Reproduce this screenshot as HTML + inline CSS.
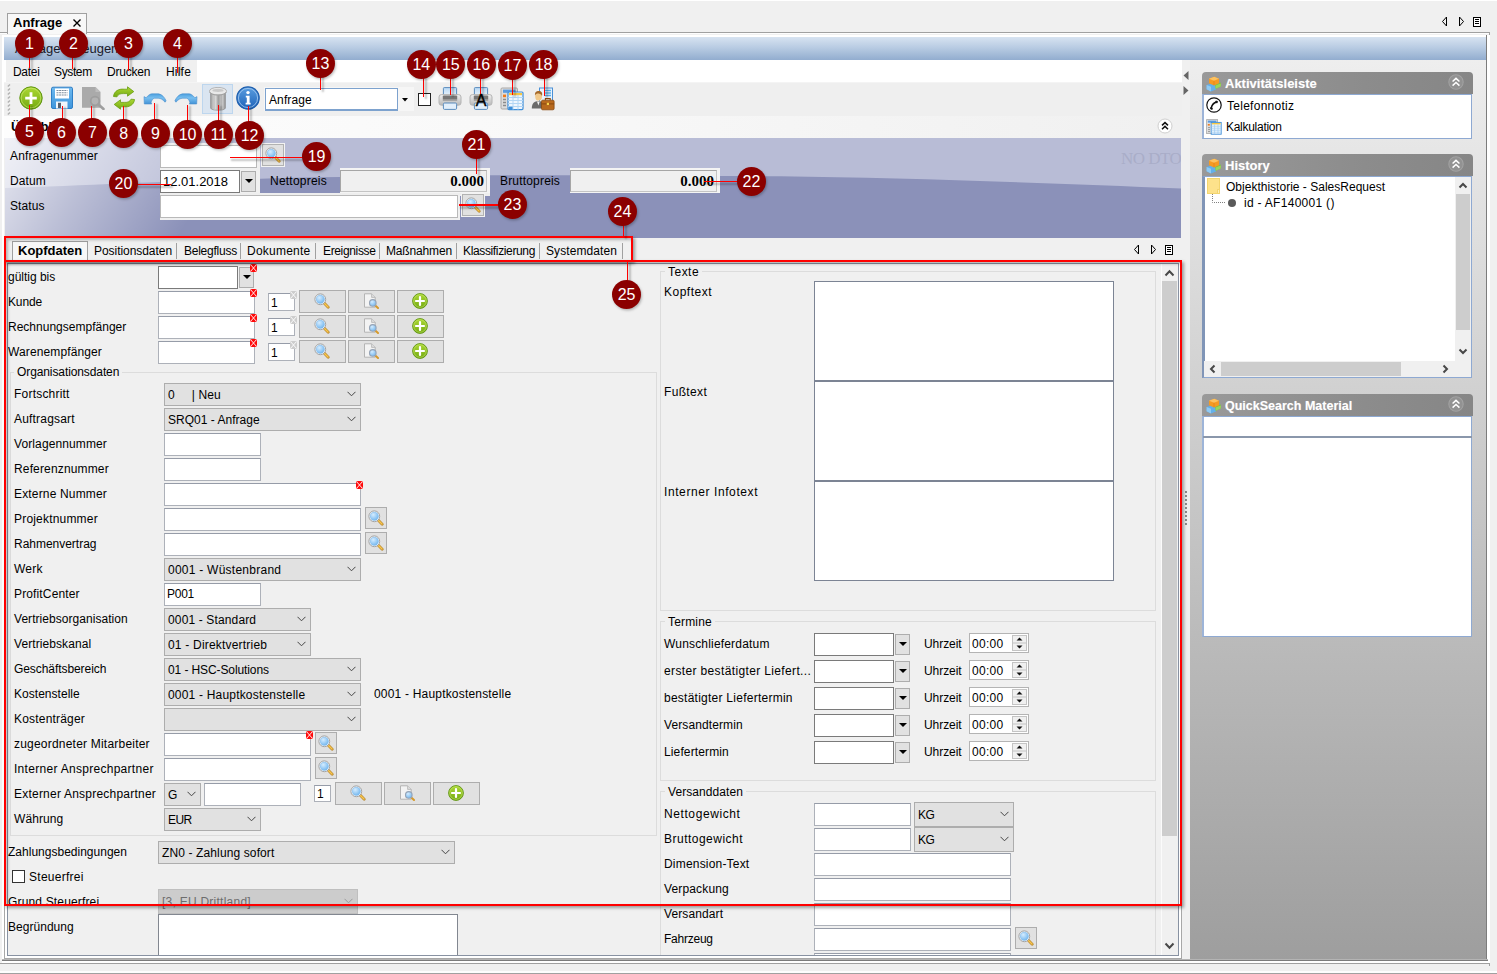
<!DOCTYPE html>
<html><head><meta charset="utf-8"><title>Anfrage</title>
<style>
*{box-sizing:border-box;margin:0;padding:0}
html,body{width:1497px;height:974px;overflow:hidden;background:#f0f0f0}
body{position:relative;font-family:"Liberation Sans",sans-serif;font-size:12px;color:#000;letter-spacing:0.1px}
.a{position:absolute}
.t{position:absolute;white-space:nowrap;line-height:14px;height:14px}
.f{position:absolute;background:#fff;border:1px solid #7a7a7a}
.fl{position:absolute;background:#fff;border:1px solid #adb1b9;border-top-color:#969ca8}
.cb{position:absolute;background:#e1e1e1;border:1px solid #adadad}
.cb>span{position:absolute;left:3px;top:50%;margin-top:-7px;line-height:14px;white-space:nowrap}
.cb>svg{position:absolute;right:4px;top:50%;margin-top:-3.5px}
.btn{position:absolute;background:#e1e1e1;border:1px solid #adadad}
.db{position:absolute;background:#e1e1e1;border:1px solid #adadad}
.db:after{content:"";position:absolute;left:2.5px;top:7px;border:4px solid transparent;border-top:4px solid #000;border-bottom:none}
.grp{position:absolute;border:1px solid #dcdcdc}
.leg{position:absolute;background:#f0f0f0;padding:0 3px;line-height:14px;white-space:nowrap}
.circ{position:absolute;width:29px;height:29px;border-radius:50%;background:#8b0000;color:#fff;font-size:16px;line-height:29px;text-align:center;letter-spacing:0;box-shadow:1px 1.5px 2.5px rgba(0,0,0,.25)}
.rl{position:absolute;background:#ff0000;box-shadow:2.4px 1.5px 2px .5px rgba(0,0,0,.24)}
.rh{box-shadow:1.5px 2.6px 2px .5px rgba(0,0,0,.24)}
.rr{position:absolute;border:2px solid #ff0000;box-shadow:2px 2px 3px rgba(0,0,0,.35), inset 2px 2px 3px rgba(0,0,0,.25)}
.ph{position:absolute;left:1202px;width:271px;height:22px;border-radius:4px 4px 0 0;background:linear-gradient(90deg,#999 0%,#8c8c8c 60%,#868686 100%)}
.ph b{position:absolute;left:23px;top:4px;color:#fff;font-size:13px;text-shadow:0 0 1px rgba(255,255,255,.4);line-height:15px;white-space:nowrap;letter-spacing:0}
.pc{position:absolute;left:1202px;width:270px;background:#fff;border:1px solid #8ea9d2;border-left:2px solid #9db4d8}
</style></head><body>
<svg width="0" height="0" style="position:absolute">
<defs>
<radialGradient id="gLens" cx="38%" cy="32%" r="75%"><stop offset="0" stop-color="#d4ecff"/><stop offset="1" stop-color="#6db4ee"/></radialGradient>
<linearGradient id="gGreen" x1="0" y1="0" x2="0" y2="1"><stop offset="0" stop-color="#acd834"/><stop offset="1" stop-color="#74aa12"/></linearGradient>
<linearGradient id="gBlueArr" x1="0" y1="0" x2="0" y2="1"><stop offset="0" stop-color="#4b9fde"/><stop offset=".4" stop-color="#78bff0"/><stop offset="1" stop-color="#4493d6"/></linearGradient>
<linearGradient id="gInfo" x1="0" y1="0" x2="0" y2="1"><stop offset="0" stop-color="#5b9ee0"/><stop offset="1" stop-color="#1d62b8"/></linearGradient>
<linearGradient id="gTrash" x1="0" y1="0" x2="1" y2="0"><stop offset="0" stop-color="#9a9a9a"/><stop offset=".28" stop-color="#e2e2e2"/><stop offset=".55" stop-color="#a4a4a4"/><stop offset=".8" stop-color="#cfcfcf"/><stop offset="1" stop-color="#8e8e8e"/></linearGradient>
<linearGradient id="gPrn" x1="0" y1="0" x2="0" y2="1"><stop offset="0" stop-color="#f0f0f0"/><stop offset="1" stop-color="#b8b8b8"/></linearGradient>
<linearGradient id="gPaper" x1="0" y1="0" x2="0" y2="1"><stop offset="0" stop-color="#b9d9f5"/><stop offset="1" stop-color="#eef6fd"/></linearGradient>
<linearGradient id="gSave" x1="0" y1="0" x2="0" y2="1"><stop offset="0" stop-color="#6db9ef"/><stop offset="1" stop-color="#3e95dc"/></linearGradient>

<symbol id="mag" viewBox="0 0 16 16">
<path d="M9.6 9.6 L14.2 14.2" stroke="#b8862c" stroke-width="2.8" stroke-linecap="round"/>
<path d="M10 10 L14 14" stroke="#f7c64e" stroke-width="1.5" stroke-linecap="round"/>
<circle cx="6.3" cy="6.3" r="5.4" fill="#fff" stroke="#9a9a9a" stroke-width=".9"/>
<circle cx="6.3" cy="6.3" r="4.2" fill="url(#gLens)" stroke="#7fb4e4" stroke-width=".5"/>
</symbol>

<symbol id="docmag" viewBox="0 0 16 16">
<path d="M1.5 0.8 H8.6 L12.2 4.4 V14.2 H1.5 Z" fill="#f3f3f3" stroke="#b4b4b4" stroke-width="1"/>
<path d="M8.6 0.8 V4.4 H12.2" fill="#dedede" stroke="#b4b4b4" stroke-width=".8"/>
<path d="M12 12.2 L15 15" stroke="#d69a2b" stroke-width="2" stroke-linecap="round"/>
<circle cx="9.8" cy="9.9" r="3.3" fill="url(#gLens)" stroke="#97a4b6" stroke-width="1.1"/>
</symbol>

<symbol id="plus16" viewBox="0 0 16 16">
<circle cx="8" cy="8" r="7.4" fill="url(#gGreen)" stroke="#5f9412" stroke-width=".9"/>
<circle cx="8" cy="8" r="6.3" fill="none" stroke="#d4ee7e" stroke-opacity=".6" stroke-width=".8"/>
<path d="M8 4 V12 M4 8 H12" stroke="#fff" stroke-width="2.2" stroke-linecap="round"/>
</symbol>

<symbol id="err" viewBox="0 0 7 8">
<rect x="0" y="0" width="7" height="8" rx="2" fill="#ff0a0a"/>
<path d="M0.9 1 L6.1 7 M6.1 1 L0.9 7" stroke="#fff" stroke-width=".9"/>
</symbol>
<symbol id="errg" viewBox="0 0 7 8">
<rect x="0" y="0" width="7" height="8" rx="2" fill="#cdcdcd"/>
<path d="M0.9 1 L6.1 7 M6.1 1 L0.9 7" stroke="#fff" stroke-width=".9"/>
</symbol>

<symbol id="plus24" viewBox="0 0 24 24">
<circle cx="12" cy="12" r="11.2" fill="url(#gGreen)" stroke="#5f9412" stroke-width="1"/>
<circle cx="12" cy="12" r="9.8" fill="none" stroke="#d4ee7e" stroke-opacity=".55" stroke-width="1"/>
<path d="M12 6.3 V17.9 M6.2 12.1 H17.8" stroke="#fff" stroke-width="2.8"/>
</symbol>

<symbol id="save24" viewBox="0 0 24 24">
<rect x="1.5" y="1.2" width="21" height="21.3" rx="1.5" fill="url(#gSave)" stroke="#2f7fc6" stroke-width="1"/>
<rect x="5" y="2.5" width="14" height="10" fill="#fff"/>
<path d="M6.5 4.5 H17.5 M6.5 6.7 H17.5 M6.5 9 H17.5" stroke="#7d8c9c" stroke-width="1.1" stroke-dasharray="2 .6"/>
<rect x="6" y="15.5" width="11.5" height="7" fill="#f2f6fb"/>
<rect x="8" y="16.8" width="3" height="5.2" fill="#55606e"/>
</symbol>

<symbol id="docsrch24" viewBox="0 0 24 24">
<path d="M1 1 H14.5 L19.5 6 V21.8 H1 Z" fill="#aaaaaa"/>
<path d="M14.5 1 V6 H19.5 Z" fill="#bdbdbd"/>
<circle cx="14" cy="15" r="4.3" fill="#b3b3b3" stroke="#9e9e9e" stroke-width="1.8"/>
<path d="M17.5 18.5 L22.5 23" stroke="#9e9e9e" stroke-width="2.6" stroke-linecap="round"/>
</symbol>

<symbol id="refresh24" viewBox="0 0 24 24">
<path d="M1.5 10.5 C2 5 7 2.6 12 3.2 L15.5 3.2 L15.5 0.8 L21.8 5.6 L15.5 10.2 L15.5 7.6 L11.5 7.6 C8 7.4 5.8 8.6 5 10.8 Z" fill="url(#gGreen)" stroke="#6a9e10" stroke-width=".8"/>
<path d="M22.5 13.5 C22 19 17 21.4 12 20.8 L8.5 20.8 L8.5 23.2 L2.2 18.4 L8.5 13.8 L8.5 16.4 L12.5 16.4 C16 16.6 18.2 15.4 19 13.2 Z" fill="url(#gGreen)" stroke="#6a9e10" stroke-width=".8"/>
</symbol>

<symbol id="undo24" viewBox="0 0 24 12">
<path d="M1 3.6 L3.1 4.8 C5 2.4 7 0.9 9 0.8 L15.5 0.8 C19 1.3 21.8 4.6 23.1 7.9 L22 9.2 C20 6.6 17.8 5.3 15.2 5.2 L11.5 5.2 C10 5.5 8.8 7.2 8.1 9.2 L8.7 11 L1.3 11 Z" fill="url(#gBlueArr)" stroke="#4a8fcc" stroke-width=".6" stroke-linejoin="round"/>
</symbol>
<symbol id="redo24" viewBox="0 0 24 12">
<path transform="translate(24 0) scale(-1 1)" d="M1 3.6 L3.1 4.8 C5 2.4 7 0.9 9 0.8 L15.5 0.8 C19 1.3 21.8 4.6 23.1 7.9 L22 9.2 C20 6.6 17.8 5.3 15.2 5.2 L11.5 5.2 C10 5.5 8.8 7.2 8.1 9.2 L8.7 11 L1.3 11 Z" fill="url(#gBlueArr)" stroke="#4a8fcc" stroke-width=".6" stroke-linejoin="round"/>
</symbol>

<symbol id="trash24" viewBox="0 0 18 24">
<path d="M1.6 5 V21 C1.8 24 16.2 24 16.4 21 V5 Z" fill="url(#gTrash)" stroke="#8e8e8e" stroke-width=".7"/>
<path d="M5.2 8 V22 M9 8.5 V22.6 M12.8 8 V22" stroke="#8a8a8a" stroke-width=".7" opacity=".55"/>
<ellipse cx="9" cy="4.2" rx="8.6" ry="3.8" fill="#e9e9e9" stroke="#a8a8a8" stroke-width=".8"/>
<ellipse cx="9" cy="3.4" rx="5.6" ry="1.7" fill="#c9c9c9"/>
<path d="M0.6 5 C2 9 16 9 17.4 5" fill="none" stroke="#9c9c9c" stroke-width=".8"/>
</symbol>

<symbol id="info24" viewBox="0 0 24 24">
<circle cx="12" cy="12" r="11.2" fill="url(#gInfo)" stroke="#1f5fae" stroke-width="1.2"/>
<circle cx="12" cy="12" r="9.6" fill="none" stroke="#a9cdf2" stroke-opacity=".8" stroke-width="1"/>
<circle cx="12" cy="6.6" r="1.7" fill="#fff"/>
<path d="M9.8 9.8 H13.6 V16.8 H14.6 V18.6 H9.6 V16.8 H10.8 V11.5 H9.8 Z" fill="#fff"/>
</symbol>

<symbol id="print24" viewBox="0 0 24 24">
<rect x="5.4" y=".6" width="13.2" height="9" rx=".8" fill="url(#gPaper)" stroke="#5b8cbd" stroke-width="1"/>
<rect x="1" y="7.6" width="22" height="10.6" rx="2.4" fill="url(#gPrn)" stroke="#b4b4b4" stroke-width="1"/>
<rect x="4.8" y="8.4" width="14.4" height="4.4" rx="1" fill="#777"/>
<rect x="4.8" y="12.2" width="14.4" height="1.6" fill="#9b9b9b"/>
<rect x="5.4" y="16" width="13.2" height="6.4" rx="1.2" fill="#e2effb" stroke="#5b8cbd" stroke-width="1"/>
</symbol>

<symbol id="calc24" viewBox="0 0 24 24">
<rect x="1" y="1" width="16.5" height="21" rx="1.2" fill="#dcdcdc" stroke="#a8a8a8" stroke-width="1"/>
<rect x="3" y="2.6" width="12.5" height="3.2" fill="#5a9be0"/>
<rect x="3" y="7.6" width="3" height="2.6" fill="#f07a1a"/>
<path d="M3 12.5 H6 M3 15.5 H6 M3 18.5 H6" stroke="#8a8a8a" stroke-width="1.6"/>
<rect x="8" y="5" width="15" height="17.6" rx="1" fill="#eef6fe" stroke="#3e8ed8" stroke-width="1.2"/>
<rect x="9" y="6" width="13" height="2.2" fill="#f7c844"/>
<path d="M8 10.5 H23 M8 13.5 H23 M8 16.5 H23 M8 19.5 H23 M13 8 V22.6 M18 8 V22.6" stroke="#b2d6f4" stroke-width="1"/>
<rect x="8.6" y="19.8" width="4" height="2.4" fill="#3e8ed8"/>
</symbol>

<symbol id="person24" viewBox="0 0 24 24">
<rect x="8.5" y="1" width="13" height="15" fill="#e8f3fd" stroke="#4a90d6" stroke-width="1"/>
<path d="M14 3.5 H20 M14 6 H20 M14 8.5 H20" stroke="#5bb0ea" stroke-width="1.4"/>
<path d="M0.8 21.5 C0.8 16 3.5 14.4 7.5 14 C11.5 14.4 13.5 16 13.5 21.5 Z" fill="#6b6b6b"/>
<path d="M6 14.4 L7.4 18.5 L8.8 14.4 Z" fill="#f2f2f2"/>
<ellipse cx="7.6" cy="9.4" rx="3.4" ry="4.2" fill="#f1c98b"/>
<path d="M4 8.6 C3.6 4.6 6 3.8 8.2 4 C10.8 4 11.8 6.4 11 9 C10.2 7 8.4 6.6 6.4 6.6 C5.2 6.8 4.6 7.6 4 8.6 Z" fill="#a4692a"/>
<rect x="10.5" y="13.2" width="12.6" height="9.6" rx="1.2" fill="#b8691d" stroke="#8a4a10" stroke-width=".8"/>
<path d="M14.4 13.2 V11.6 H19.2 V13.2" fill="none" stroke="#8a4a10" stroke-width="1.1"/>
<rect x="10.5" y="16.4" width="12.6" height="1" fill="#8a4a10"/>
<rect x="15.8" y="15.8" width="2.2" height="2.2" fill="#f6d34a"/>
</symbol>

<symbol id="boxes16" viewBox="0 0 16 16">
<path d="M0.6 9 L5.6 7.4 L10 9.2 L10 13.4 L5 15.4 L0.6 13.2 Z" fill="#63b0ea"/>
<path d="M0.6 9 L5 10.8 L5 15.4 L0.6 13.2 Z" fill="#8fcaf4"/>
<path d="M9 8.2 L14.8 6.4 L14.8 10.6 L9.6 12.8 Z" fill="#7fc242"/>
<path d="M9.6 9.4 L14.8 7.4 L14.8 10.6 L9.6 12.8 Z" fill="#9ad55a"/>
<path d="M3 2.8 L8.2 0.8 L13 2.8 L13 7.2 L8 9.4 L3 7.2 Z" fill="#f59a23"/>
<path d="M3 2.8 L8 4.8 L13 2.8 L8.2 0.8 Z" fill="#fbc262"/>
<path d="M8 4.8 V9.4" stroke="#d97d12" stroke-width=".6"/>
</symbol>

<symbol id="phone16" viewBox="0 0 16 16">
<circle cx="8" cy="8" r="7.2" fill="#fff" stroke="#111" stroke-width="1.2"/>
<path d="M5.3 11.2 C5.6 8.6 7.6 6 10.4 5" fill="none" stroke="#111" stroke-width="1.5" stroke-linecap="round"/>
<path d="M4.6 10.6 L6.4 11.2 L6.2 12.4 L4.6 12 Z M9.8 4 L11.6 4.4 L11.2 5.8 L9.9 5.6 Z" fill="#111" stroke="#111" stroke-width=".8" stroke-linejoin="round"/>
</symbol>

<symbol id="calc16" viewBox="0 0 16 16">
<rect x=".6" y=".6" width="11" height="14" fill="#dedede" stroke="#a8a8a8" stroke-width=".8"/>
<rect x="1.8" y="1.6" width="8.6" height="2" fill="#5a9be0"/>
<rect x="1.8" y="5" width="2" height="1.6" fill="#f07a1a"/>
<path d="M2 8.6 H4 M2 10.6 H4 M2 12.6 H4" stroke="#9a9a9a" stroke-width="1"/>
<rect x="5.2" y="3.4" width="10" height="11.8" fill="#eef6fe" stroke="#3e8ed8" stroke-width=".9"/>
<rect x="5.8" y="4" width="8.8" height="1.4" fill="#f7c844"/>
<path d="M5.2 7.2 H15.2 M5.2 9.2 H15.2 M5.2 11.2 H15.2 M5.2 13.2 H15.2 M8.6 5.4 V15.2 M12 5.4 V15.2" stroke="#9ccaf2" stroke-width=".7"/>
</symbol>

<symbol id="chev" viewBox="0 0 14 14">
<circle cx="7" cy="7" r="6.3" fill="#929292" stroke="#a2a2a2" stroke-width=".9"/>
<path d="M4 6.6 L7 3.8 L10 6.6 M4 10.2 L7 7.4 L10 10.2" fill="none" stroke="#fff" stroke-width="1.3"/>
</symbol>
<symbol id="chevw" viewBox="0 0 16 16">
<circle cx="8" cy="8" r="7" fill="#fff" stroke="#cfcfcf" stroke-width="1"/>
<path d="M5 7.4 L8 4.6 L11 7.4 M5 11.2 L8 8.4 L11 11.2" fill="none" stroke="#111" stroke-width="1.5"/>
</symbol>
</defs></svg>
<div class="a" style="left:0px;top:32px;width:1490px;height:1px;background:#a0a0a0"></div>
<div class="a" style="left:0px;top:33px;width:1490px;height:1px;background:#fdfdfd"></div>
<div class="a" style="left:1489px;top:32px;width:1px;height:934px;background:#a0a0a0"></div>
<div class="a" style="left:7px;top:13px;width:80px;height:21px;background:#f8f8f8;border:1px solid #a0a0a0;border-bottom:none"></div>
<div class="a" style="left:0px;top:0px;width:1497px;height:1px;background:#fff"></div>
<div class="t" style="left:13px;top:15px;font-weight:bold;font-size:13px;line-height:15px;letter-spacing:0">Anfrage</div>
<svg class="a" style="left:72px;top:18px" width="10" height="10" viewBox="0 0 10 10"><path d="M1.5 1.5 L8.5 8.5 M8.5 1.5 L1.5 8.5" stroke="#000" stroke-width="1.4"/></svg>
<svg class="a" style="left:1440px;top:15px" width="44" height="13" viewBox="0 0 44 13"><path d="M6.5 2 L2.5 6.5 L6.5 11 Z" fill="none" stroke="#000" stroke-width="1"/><path d="M19.5 2 L23.5 6.5 L19.5 11 Z" fill="none" stroke="#000" stroke-width="1"/><g shape-rendering="crispEdges"><rect x="33.5" y="2.5" width="7" height="9" fill="#fff" stroke="#000" stroke-width="1"/><path d="M35 4.5 H39 M35 6.5 H39 M35 8.5 H39" stroke="#000" stroke-width="1"/></g></svg>
<div class="a" style="left:2px;top:35px;width:1488px;height:926px;background:#fff"></div>
<div class="a" style="left:1486px;top:35px;width:1px;height:926px;background:#7c7c7c"></div>
<div class="a" style="left:1487px;top:35px;width:2px;height:928px;background:#fff"></div>
<div class="a" style="left:4px;top:37px;width:1482px;height:23px;background:linear-gradient(180deg,#d7e3f1 0%,#b9cce3 45%,#92adcf 100%)"></div>
<div class="a" style="left:4px;top:60px;width:1482px;height:899px;background:#f0f0f0"></div>
<div class="t" style="left:15px;top:41px;font-size:13px;line-height:15px;color:#1a1a2a;letter-spacing:0">Anfrage erzeugen</div>
<div class="a" style="left:4px;top:60px;width:1178px;height:22px;background:#fff"></div>
<div class="a" style="left:6px;top:60px;width:191px;height:22px;background:#f0f0f0"></div>
<div class="t" style="left:13px;top:65px;"><span style="letter-spacing:-0.30px">Datei</span></div>
<div class="t" style="left:54px;top:65px;"><span style="letter-spacing:-0.37px">System</span></div>
<div class="t" style="left:107px;top:65px;"><span style="letter-spacing:-0.21px">Drucken</span></div>
<div class="t" style="left:166px;top:65px;"><span style="letter-spacing:0.20px">Hilfe</span></div>
<div class="a" style="left:4px;top:82px;width:1178px;height:34px;background:#efefef"></div>
<div class="a" style="left:4px;top:82px;width:1178px;height:1px;background:#f4f4f4"></div>
<svg class="a" style="left:7px;top:84px" width="4" height="32" viewBox="0 0 4 32"><path d="M0.8 2.6 L3 0.6" stroke="#b0b0b0" stroke-width="1.3"/><path d="M0.8 6.6 L3 4.6" stroke="#b0b0b0" stroke-width="1.3"/><path d="M0.8 10.6 L3 8.6" stroke="#b0b0b0" stroke-width="1.3"/><path d="M0.8 14.6 L3 12.6" stroke="#b0b0b0" stroke-width="1.3"/><path d="M0.8 18.6 L3 16.6" stroke="#b0b0b0" stroke-width="1.3"/><path d="M0.8 22.6 L3 20.6" stroke="#b0b0b0" stroke-width="1.3"/><path d="M0.8 26.6 L3 24.6" stroke="#b0b0b0" stroke-width="1.3"/><path d="M0.8 30.6 L3 28.6" stroke="#b0b0b0" stroke-width="1.3"/></svg>
<svg class="a" style="left:19px;top:86px;" width="24" height="24" viewBox="0 0 24 24"><use href="#plus24"/></svg>
<svg class="a" style="left:50px;top:86px;" width="24" height="24" viewBox="0 0 24 24"><use href="#save24"/></svg>
<svg class="a" style="left:81px;top:86px;" width="24" height="24" viewBox="0 0 24 24"><use href="#docsrch24"/></svg>
<svg class="a" style="left:112px;top:86px;" width="24" height="24" viewBox="0 0 24 24"><use href="#refresh24"/></svg>
<svg class="a" style="left:143px;top:92.5px;" width="24" height="12" viewBox="0 0 24 12"><use href="#undo24"/></svg>
<svg class="a" style="left:174px;top:92.5px;" width="24" height="12" viewBox="0 0 24 12"><use href="#redo24"/></svg>
<div class="a" style="left:202px;top:84px;width:31px;height:30px;background:#dae5f1;border:1px solid #bdd6ee"></div>
<svg class="a" style="left:208.5px;top:86.5px;" width="18" height="24" viewBox="0 0 18 24"><use href="#trash24"/></svg>
<svg class="a" style="left:236px;top:86px;" width="24" height="24" viewBox="0 0 24 24"><use href="#info24"/></svg>
<div class="a" style="left:264px;top:87px;width:150px;height:24px;background:#f6f6f6"></div>
<div class="a" style="left:265px;top:88px;width:133px;height:23px;background:#fff;border:1px solid #7da2ce;border-bottom:2px solid #7da2ce"></div>
<div class="t" style="left:269px;top:93px;">Anfrage</div>
<svg class="a" style="left:401.5px;top:98px" width="6" height="3.5" viewBox="0 0 6 3.5"><path d="M0 0 H6 L3 3.5 Z" fill="#000"/></svg>
<div class="a" style="left:418px;top:93px;width:13px;height:13px;background:#fff;border:1px solid #222"></div>
<svg class="a" style="left:438px;top:87px;" width="24" height="24" viewBox="0 0 24 24"><use href="#print24"/></svg>
<svg class="a" style="left:469px;top:87px;" width="24" height="24" viewBox="0 0 24 24"><use href="#print24"/></svg>
<div class="t" style="left:473px;top:91px;-webkit-text-stroke:.45px #000;font-size:16px;line-height:19px;height:19px;letter-spacing:0;width:16px;text-align:center">A</div>
<svg class="a" style="left:500px;top:87px;" width="24" height="24" viewBox="0 0 24 24"><use href="#calc24"/></svg>
<svg class="a" style="left:531px;top:87px;" width="24" height="24" viewBox="0 0 24 24"><use href="#person24"/></svg>
<div class="a" style="left:4px;top:116px;width:1178px;height:22px;background:linear-gradient(90deg,#fdfdfd 0%,#f9f9f9 40%,#f0f0f0 100%)"></div>
<div class="t" style="left:11px;top:119px;font-weight:bold;font-size:13px;line-height:15px;letter-spacing:0">Überblick</div>
<svg class="a" style="left:1157px;top:118px;" width="16" height="16" viewBox="0 0 16 16"><use href="#chevw"/></svg>
<svg class="a" style="left:5px;top:138px" width="1176" height="100" viewBox="0 0 1177 100" preserveAspectRatio="none">
<defs><linearGradient id="hdL" gradientUnits="userSpaceOnUse" x1="0" y1="0" x2="170" y2="105"><stop offset="0" stop-color="#fff" stop-opacity=".8"/><stop offset=".45" stop-color="#fff" stop-opacity=".42"/><stop offset="1" stop-color="#fff" stop-opacity="0"/></linearGradient></defs>
<rect width="1177" height="100" fill="#b8bcd6"/>
<path d="M0 50 C100 47 200 41 336 39 C450 37 560 36.5 776 38.3 C900 40 1050 45 1177 50.5 V100 H0 Z" fill="#8b91b9"/>
<rect width="260" height="100" fill="url(#hdL)"/>
</svg>
<div class="t" style="left:10px;top:149px;"><span style="letter-spacing:0.15px">Anfragenummer</span></div>
<div class="t" style="left:10px;top:174px;"><span style="letter-spacing:0.13px">Datum</span></div>
<div class="t" style="left:10px;top:199px;"><span style="letter-spacing:0.11px">Status</span></div>
<div class="a" style="left:160px;top:143px;width:100px;height:27px;background:#f0f0f0"></div>
<div class="a" style="left:160px;top:145px;width:97px;height:23px;background:#fff;border:1px solid #b9b9b9"></div>
<div class="a" style="left:262px;top:144px;width:22px;height:22px;background:#e1e1e1;border:1px solid #b2b2b2;box-shadow:0 0 0 1px #f3f3f3"><svg class="a" style="left:2px;top:2px" width="16" height="16" viewBox="0 0 16 16"><use href="#mag"/></svg></div>
<div class="a" style="left:160px;top:170px;width:100px;height:23px;background:#f0f0f0"></div>
<div class="a" style="left:160px;top:193px;width:330px;height:3px;background:#eeeeee"></div>
<div class="f" style="left:160px;top:170px;width:80px;height:23px;"></div>
<div class="t" style="left:163px;top:174px;font-size:13px;line-height:15px;letter-spacing:0">12.01.2018</div>
<div class="db" style="left:241px;top:171px;width:15px;height:21px;"></div>
<div class="t" style="left:270px;top:174px;"><span style="letter-spacing:0.23px">Nettopreis</span></div>
<div class="a" style="left:340px;top:168px;width:150px;height:25px;background:#f4f4f4"></div>
<div class="a" style="left:340px;top:170px;width:147px;height:22px;background:#f0f0f0;border:1px solid #a6a6a6;border-bottom-color:#c4c4c4;border-right-color:#c4c4c4"></div>
<div class="t" style="left:440px;top:173px;font-family:'Liberation Serif',serif;font-weight:bold;font-size:15px;line-height:17px;letter-spacing:0;width:44px;text-align:right">0.000</div>
<div class="t" style="left:500px;top:174px;"><span style="letter-spacing:0.18px">Bruttopreis</span></div>
<div class="a" style="left:570px;top:168px;width:150px;height:25px;background:#f4f4f4"></div>
<div class="a" style="left:570px;top:170px;width:147px;height:22px;background:#f0f0f0;border:1px solid #a6a6a6;border-bottom-color:#c4c4c4;border-right-color:#c4c4c4"></div>
<div class="t" style="left:670px;top:173px;font-family:'Liberation Serif',serif;font-weight:bold;font-size:15px;line-height:17px;letter-spacing:0;width:44px;text-align:right">0.000</div>
<div class="a" style="left:160px;top:195px;width:298px;height:23px;background:#fff;border:1px solid #b9b9b9;box-shadow:1px 1px 0 1px #f0f0f0"></div>
<div class="a" style="left:462px;top:194px;width:22px;height:22px;background:#e1e1e1;border:1px solid #b2b2b2;box-shadow:0 0 0 1px #f3f3f3"><svg class="a" style="left:2px;top:2px" width="16" height="16" viewBox="0 0 16 16"><use href="#mag"/></svg></div>
<div class="t" style="left:1121px;top:149px;font-family:'Liberation Serif',serif;font-size:17px;line-height:19px;height:19px;color:#a9adc8;letter-spacing:-.55px;width:60px;overflow:hidden">NO DTO</div>
<div class="a" style="left:4px;top:238px;width:1178px;height:25px;background:#f0f0f0"></div>
<div class="a" style="left:4px;top:261px;width:1178px;height:1px;background:#a0a0a0"></div>
<div class="a" style="left:12px;top:241px;width:76px;height:21px;background:#f7f7f7;border:1px solid #a0a0a0;border-bottom:none"></div>
<div class="t" style="left:18px;top:243px;font-weight:bold;font-size:13px;line-height:15px;letter-spacing:0">Kopfdaten</div>
<div class="t" style="left:94px;top:244px;"><span style="letter-spacing:-0.05px">Positionsdaten</span></div>
<div class="t" style="left:184px;top:244px;"><span style="letter-spacing:-0.24px">Belegfluss</span></div>
<div class="t" style="left:247px;top:244px;"><span style="letter-spacing:0.24px">Dokumente</span></div>
<div class="t" style="left:323px;top:244px;"><span style="letter-spacing:-0.35px">Ereignisse</span></div>
<div class="t" style="left:386px;top:244px;"><span style="letter-spacing:-0.15px">Maßnahmen</span></div>
<div class="t" style="left:463px;top:244px;"><span style="letter-spacing:-0.36px">Klassifizierung</span></div>
<div class="t" style="left:546px;top:244px;"><span style="letter-spacing:0.09px">Systemdaten</span></div>
<div class="a" style="left:176px;top:243px;width:1px;height:16px;background:#a0a0a0"></div>
<div class="a" style="left:240px;top:243px;width:1px;height:16px;background:#a0a0a0"></div>
<div class="a" style="left:315px;top:243px;width:1px;height:16px;background:#a0a0a0"></div>
<div class="a" style="left:379px;top:243px;width:1px;height:16px;background:#a0a0a0"></div>
<div class="a" style="left:456px;top:243px;width:1px;height:16px;background:#a0a0a0"></div>
<div class="a" style="left:539px;top:243px;width:1px;height:16px;background:#a0a0a0"></div>
<div class="a" style="left:622px;top:243px;width:1px;height:16px;background:#a0a0a0"></div>
<svg class="a" style="left:1132px;top:243px" width="44" height="13" viewBox="0 0 44 13"><path d="M6.5 2 L2.5 6.5 L6.5 11 Z" fill="none" stroke="#000" stroke-width="1"/><path d="M19.5 2 L23.5 6.5 L19.5 11 Z" fill="none" stroke="#000" stroke-width="1"/><g shape-rendering="crispEdges"><rect x="33.5" y="2.5" width="7" height="9" fill="#fff" stroke="#000" stroke-width="1"/><path d="M35 4.5 H39 M35 6.5 H39 M35 8.5 H39" stroke="#000" stroke-width="1"/></g></svg>
<div class="a" style="left:0;top:263px;width:1161px;height:692px;overflow:hidden">
<div class="a" style="left:0;top:-263px;width:1161px;height:1200px">
<div class="t" style="left:8px;top:270px;"><span style="letter-spacing:-0.02px">gültig bis</span></div>
<div class="f" style="left:158px;top:266px;width:80px;height:23px;"></div>
<div class="db" style="left:239px;top:267px;width:15px;height:21px;"></div>
<svg class="a" style="left:250px;top:264px;" width="7" height="8" viewBox="0 0 7 8"><use href="#err"/></svg>
<div class="t" style="left:8px;top:295px;"><span style="letter-spacing:-0.14px">Kunde</span></div>
<div class="fl" style="left:158px;top:291px;width:97px;height:23px;"></div>
<svg class="a" style="left:250px;top:289px;" width="7" height="8" viewBox="0 0 7 8"><use href="#err"/></svg>
<div class="fl" style="left:268px;top:293px;width:27px;height:18px;"></div>
<div class="t" style="left:271px;top:296px;">1</div>
<svg class="a" style="left:290px;top:291px;" width="7" height="8" viewBox="0 0 7 8"><use href="#errg"/></svg>
<div class="btn" style="left:299px;top:290px;width:47px;height:23px"><svg class="a" style="left:14px;top:2px" width="16" height="16" viewBox="0 0 16 16"><use href="#mag"/></svg></div>
<div class="btn" style="left:348px;top:290px;width:47px;height:23px"><svg class="a" style="left:14px;top:2px" width="16" height="16" viewBox="0 0 16 16"><use href="#docmag"/></svg></div>
<div class="btn" style="left:397px;top:290px;width:47px;height:23px"><svg class="a" style="left:14px;top:2px" width="16" height="16" viewBox="0 0 16 16"><use href="#plus16"/></svg></div>
<div class="t" style="left:8px;top:320px;"><span style="letter-spacing:0.01px">Rechnungsempfänger</span></div>
<div class="fl" style="left:158px;top:316px;width:97px;height:23px;"></div>
<svg class="a" style="left:250px;top:314px;" width="7" height="8" viewBox="0 0 7 8"><use href="#err"/></svg>
<div class="fl" style="left:268px;top:318px;width:27px;height:18px;"></div>
<div class="t" style="left:271px;top:321px;">1</div>
<svg class="a" style="left:290px;top:316px;" width="7" height="8" viewBox="0 0 7 8"><use href="#errg"/></svg>
<div class="btn" style="left:299px;top:315px;width:47px;height:23px"><svg class="a" style="left:14px;top:2px" width="16" height="16" viewBox="0 0 16 16"><use href="#mag"/></svg></div>
<div class="btn" style="left:348px;top:315px;width:47px;height:23px"><svg class="a" style="left:14px;top:2px" width="16" height="16" viewBox="0 0 16 16"><use href="#docmag"/></svg></div>
<div class="btn" style="left:397px;top:315px;width:47px;height:23px"><svg class="a" style="left:14px;top:2px" width="16" height="16" viewBox="0 0 16 16"><use href="#plus16"/></svg></div>
<div class="t" style="left:8px;top:345px;"><span style="letter-spacing:0.12px">Warenempfänger</span></div>
<div class="fl" style="left:158px;top:341px;width:97px;height:23px;"></div>
<svg class="a" style="left:250px;top:339px;" width="7" height="8" viewBox="0 0 7 8"><use href="#err"/></svg>
<div class="fl" style="left:268px;top:343px;width:27px;height:18px;"></div>
<div class="t" style="left:271px;top:346px;">1</div>
<svg class="a" style="left:290px;top:341px;" width="7" height="8" viewBox="0 0 7 8"><use href="#errg"/></svg>
<div class="btn" style="left:299px;top:340px;width:47px;height:23px"><svg class="a" style="left:14px;top:2px" width="16" height="16" viewBox="0 0 16 16"><use href="#mag"/></svg></div>
<div class="btn" style="left:348px;top:340px;width:47px;height:23px"><svg class="a" style="left:14px;top:2px" width="16" height="16" viewBox="0 0 16 16"><use href="#docmag"/></svg></div>
<div class="btn" style="left:397px;top:340px;width:47px;height:23px"><svg class="a" style="left:14px;top:2px" width="16" height="16" viewBox="0 0 16 16"><use href="#plus16"/></svg></div>
<div class="grp" style="left:10px;top:372px;width:647px;height:464px"></div>
<div class="leg" style="left:14px;top:365px"><span style="letter-spacing:-0.10px">Organisationsdaten</span></div>
<div class="t" style="left:14px;top:387px;"><span style="letter-spacing:0.21px">Fortschritt</span></div>
<div class="t" style="left:14px;top:412px;"><span style="letter-spacing:0.19px">Auftragsart</span></div>
<div class="t" style="left:14px;top:437px;"><span style="letter-spacing:0.11px">Vorlagennummer</span></div>
<div class="t" style="left:14px;top:462px;"><span style="letter-spacing:0.15px">Referenznummer</span></div>
<div class="t" style="left:14px;top:487px;"><span style="letter-spacing:0.16px">Externe Nummer</span></div>
<div class="t" style="left:14px;top:512px;"><span style="letter-spacing:0.19px">Projektnummer</span></div>
<div class="t" style="left:14px;top:537px;"><span style="letter-spacing:-0.02px">Rahmenvertrag</span></div>
<div class="t" style="left:14px;top:562px;"><span style="letter-spacing:0.23px">Werk</span></div>
<div class="t" style="left:14px;top:587px;"><span style="letter-spacing:0.14px">ProfitCenter</span></div>
<div class="t" style="left:14px;top:612px;"><span style="letter-spacing:0.05px">Vertriebsorganisation</span></div>
<div class="t" style="left:14px;top:637px;"><span style="letter-spacing:0.08px">Vertriebskanal</span></div>
<div class="t" style="left:14px;top:662px;"><span style="letter-spacing:-0.07px">Geschäftsbereich</span></div>
<div class="t" style="left:14px;top:687px;"><span style="letter-spacing:0.03px">Kostenstelle</span></div>
<div class="t" style="left:14px;top:712px;"><span style="letter-spacing:0.19px">Kostenträger</span></div>
<div class="t" style="left:14px;top:737px;"><span style="letter-spacing:0.21px">zugeordneter Mitarbeiter</span></div>
<div class="t" style="left:14px;top:762px;"><span style="letter-spacing:0.29px">Interner Ansprechpartner</span></div>
<div class="t" style="left:14px;top:787px;"><span style="letter-spacing:0.22px">Externer Ansprechpartner</span></div>
<div class="t" style="left:14px;top:812px;"><span style="letter-spacing:0.10px">Währung</span></div>
<div class="cb" style="left:164px;top:383px;width:197px;height:23px;color:#000"><span>0<i style="display:inline-block;width:17px"></i>| Neu</span><svg width="9" height="6" viewBox="0 0 9 6"><path d="M0.5 0.8 L4.5 4.8 L8.5 0.8" fill="none" stroke="#444" stroke-width="1"/></svg></div>
<div class="cb" style="left:164px;top:408px;width:197px;height:23px;color:#000"><span><span style="letter-spacing:0.02px">SRQ01 - Anfrage</span></span><svg width="9" height="6" viewBox="0 0 9 6"><path d="M0.5 0.8 L4.5 4.8 L8.5 0.8" fill="none" stroke="#444" stroke-width="1"/></svg></div>
<div class="fl" style="left:164px;top:433px;width:97px;height:23px;"></div>
<div class="fl" style="left:164px;top:458px;width:97px;height:23px;"></div>
<div class="fl" style="left:164px;top:483px;width:197px;height:23px;"></div>
<svg class="a" style="left:356px;top:481px;" width="7" height="8" viewBox="0 0 7 8"><use href="#err"/></svg>
<div class="fl" style="left:164px;top:508px;width:197px;height:23px;"></div>
<div class="btn" style="left:365px;top:507px;width:22px;height:22px"><svg class="a" style="left:2px;top:2px" width="16" height="16" viewBox="0 0 16 16"><use href="#mag"/></svg></div>
<div class="fl" style="left:164px;top:533px;width:197px;height:23px;"></div>
<div class="btn" style="left:365px;top:532px;width:22px;height:22px"><svg class="a" style="left:2px;top:2px" width="16" height="16" viewBox="0 0 16 16"><use href="#mag"/></svg></div>
<div class="cb" style="left:164px;top:558px;width:197px;height:23px;color:#000"><span><span style="letter-spacing:0.25px">0001 - Wüstenbrand</span></span><svg width="9" height="6" viewBox="0 0 9 6"><path d="M0.5 0.8 L4.5 4.8 L8.5 0.8" fill="none" stroke="#444" stroke-width="1"/></svg></div>
<div class="fl" style="left:164px;top:583px;width:97px;height:23px;"></div>
<div class="t" style="left:167px;top:587px;"><span style="letter-spacing:-0.26px">P001</span></div>
<div class="cb" style="left:164px;top:608px;width:147px;height:23px;color:#000"><span><span style="letter-spacing:0.14px">0001 - Standard</span></span><svg width="9" height="6" viewBox="0 0 9 6"><path d="M0.5 0.8 L4.5 4.8 L8.5 0.8" fill="none" stroke="#444" stroke-width="1"/></svg></div>
<div class="cb" style="left:164px;top:633px;width:147px;height:23px;color:#000"><span><span style="letter-spacing:0.20px">01 - Direktvertrieb</span></span><svg width="9" height="6" viewBox="0 0 9 6"><path d="M0.5 0.8 L4.5 4.8 L8.5 0.8" fill="none" stroke="#444" stroke-width="1"/></svg></div>
<div class="cb" style="left:164px;top:658px;width:197px;height:23px;color:#000"><span><span style="letter-spacing:-0.10px">01 - HSC-Solutions</span></span><svg width="9" height="6" viewBox="0 0 9 6"><path d="M0.5 0.8 L4.5 4.8 L8.5 0.8" fill="none" stroke="#444" stroke-width="1"/></svg></div>
<div class="cb" style="left:164px;top:683px;width:197px;height:23px;color:#000"><span><span style="letter-spacing:0.19px">0001 - Hauptkostenstelle</span></span><svg width="9" height="6" viewBox="0 0 9 6"><path d="M0.5 0.8 L4.5 4.8 L8.5 0.8" fill="none" stroke="#444" stroke-width="1"/></svg></div>
<div class="t" style="left:374px;top:687px;"><span style="letter-spacing:0.19px">0001 - Hauptkostenstelle</span></div>
<div class="cb" style="left:164px;top:708px;width:197px;height:23px;color:#000"><span></span><svg width="9" height="6" viewBox="0 0 9 6"><path d="M0.5 0.8 L4.5 4.8 L8.5 0.8" fill="none" stroke="#444" stroke-width="1"/></svg></div>
<div class="fl" style="left:164px;top:733px;width:147px;height:23px;"></div>
<svg class="a" style="left:306px;top:731px;" width="7" height="8" viewBox="0 0 7 8"><use href="#err"/></svg>
<div class="btn" style="left:315px;top:732px;width:22px;height:22px"><svg class="a" style="left:2px;top:2px" width="16" height="16" viewBox="0 0 16 16"><use href="#mag"/></svg></div>
<div class="fl" style="left:164px;top:758px;width:147px;height:23px;"></div>
<div class="btn" style="left:315px;top:757px;width:22px;height:22px"><svg class="a" style="left:2px;top:2px" width="16" height="16" viewBox="0 0 16 16"><use href="#mag"/></svg></div>
<div class="cb" style="left:164px;top:783px;width:37px;height:23px;color:#000"><span>G</span><svg width="9" height="6" viewBox="0 0 9 6"><path d="M0.5 0.8 L4.5 4.8 L8.5 0.8" fill="none" stroke="#444" stroke-width="1"/></svg></div>
<div class="fl" style="left:204px;top:783px;width:97px;height:23px;"></div>
<div class="fl" style="left:314px;top:785px;width:17px;height:17px;"></div>
<div class="t" style="left:317px;top:787px;">1</div>
<div class="btn" style="left:335px;top:782px;width:47px;height:23px"><svg class="a" style="left:14px;top:2px" width="16" height="16" viewBox="0 0 16 16"><use href="#mag"/></svg></div>
<div class="btn" style="left:384px;top:782px;width:47px;height:23px"><svg class="a" style="left:14px;top:2px" width="16" height="16" viewBox="0 0 16 16"><use href="#docmag"/></svg></div>
<div class="btn" style="left:433px;top:782px;width:47px;height:23px"><svg class="a" style="left:14px;top:2px" width="16" height="16" viewBox="0 0 16 16"><use href="#plus16"/></svg></div>
<div class="cb" style="left:164px;top:808px;width:97px;height:23px;color:#000"><span><span style="letter-spacing:-0.60px">EUR</span></span><svg width="9" height="6" viewBox="0 0 9 6"><path d="M0.5 0.8 L4.5 4.8 L8.5 0.8" fill="none" stroke="#444" stroke-width="1"/></svg></div>
<div class="t" style="left:8px;top:845px;"><span style="letter-spacing:0.01px">Zahlungsbedingungen</span></div>
<div class="cb" style="left:158px;top:841px;width:297px;height:23px;color:#000"><span><span style="letter-spacing:0.12px">ZN0 - Zahlung sofort</span></span><svg width="9" height="6" viewBox="0 0 9 6"><path d="M0.5 0.8 L4.5 4.8 L8.5 0.8" fill="none" stroke="#444" stroke-width="1"/></svg></div>
<div class="a" style="left:12px;top:870px;width:13px;height:13px;background:#fff;border:1px solid #333"></div>
<div class="t" style="left:29px;top:870px;"><span style="letter-spacing:0.27px">Steuerfrei</span></div>
<div class="t" style="left:8px;top:895px;"><span style="letter-spacing:0.16px">Grund Steuerfrei</span></div>
<div class="cb" style="left:158px;top:889px;width:200px;height:25px;background:#cccccc;border-color:#bfbfbf;color:#6d6d6d"><span><span style="letter-spacing:0.25px">[3, EU Drittland]</span></span><svg width="9" height="6" viewBox="0 0 9 6"><path d="M0.5 0.8 L4.5 4.8 L8.5 0.8" fill="none" stroke="#9a9a9a" stroke-width="1"/></svg></div>
<div class="t" style="left:8px;top:920px;"><span style="letter-spacing:0.03px">Begründung</span></div>
<div class="f" style="left:158px;top:914px;width:300px;height:60px;border-color:#828790"></div>
<div class="grp" style="left:660px;top:271px;width:496px;height:340px"></div>
<div class="leg" style="left:665px;top:265px"><span style="letter-spacing:0.48px">Texte</span></div>
<div class="t" style="left:664px;top:285px;"><span style="letter-spacing:0.50px">Kopftext</span></div>
<div class="f" style="left:814px;top:281px;width:300px;height:100px;border-color:#7c8494"></div>
<div class="t" style="left:664px;top:385px;"><span style="letter-spacing:0.34px">Fußtext</span></div>
<div class="f" style="left:814px;top:381px;width:300px;height:100px;border-color:#7c8494"></div>
<div class="t" style="left:664px;top:485px;"><span style="letter-spacing:0.59px">Interner Infotext</span></div>
<div class="f" style="left:814px;top:481px;width:300px;height:100px;border-color:#7c8494"></div>
<div class="grp" style="left:660px;top:621px;width:496px;height:160px"></div>
<div class="leg" style="left:665px;top:615px"><span style="letter-spacing:0.16px">Termine</span></div>
<div class="t" style="left:664px;top:637px;"><span style="letter-spacing:0.18px">Wunschlieferdatum</span></div>
<div class="f" style="left:814px;top:633px;width:80px;height:23px;"></div>
<div class="db" style="left:895px;top:634px;width:15px;height:21px;"></div>
<div class="t" style="left:924px;top:637px;"><span style="letter-spacing:-0.06px">Uhrzeit</span></div>
<div class="fl" style="left:969px;top:633px;width:60px;height:20px;border-color:#b4b4b4"></div>
<div class="t" style="left:972px;top:637px;"><span style="letter-spacing:0.29px">00:00</span></div>
<svg class="a" style="left:1012px;top:635px" width="15" height="16" viewBox="0 0 15 16"><rect x=".5" y=".5" width="14" height="15" fill="#f0f0f0" stroke="#c4c4c4"/><path d="M.5 8 H14.5" stroke="#c4c4c4"/><path d="M4.5 5.5 L7.5 2.5 L10.5 5.5 Z M4.5 10.5 L7.5 13.5 L10.5 10.5 Z" fill="#111"/></svg>
<div class="t" style="left:664px;top:664px;"><span style="letter-spacing:0.36px">erster bestätigter Liefert...</span></div>
<div class="f" style="left:814px;top:660px;width:80px;height:23px;"></div>
<div class="db" style="left:895px;top:661px;width:15px;height:21px;"></div>
<div class="t" style="left:924px;top:664px;"><span style="letter-spacing:-0.06px">Uhrzeit</span></div>
<div class="fl" style="left:969px;top:660px;width:60px;height:20px;border-color:#b4b4b4"></div>
<div class="t" style="left:972px;top:664px;"><span style="letter-spacing:0.29px">00:00</span></div>
<svg class="a" style="left:1012px;top:662px" width="15" height="16" viewBox="0 0 15 16"><rect x=".5" y=".5" width="14" height="15" fill="#f0f0f0" stroke="#c4c4c4"/><path d="M.5 8 H14.5" stroke="#c4c4c4"/><path d="M4.5 5.5 L7.5 2.5 L10.5 5.5 Z M4.5 10.5 L7.5 13.5 L10.5 10.5 Z" fill="#111"/></svg>
<div class="t" style="left:664px;top:691px;"><span style="letter-spacing:0.25px">bestätigter Liefertermin</span></div>
<div class="f" style="left:814px;top:687px;width:80px;height:23px;"></div>
<div class="db" style="left:895px;top:688px;width:15px;height:21px;"></div>
<div class="t" style="left:924px;top:691px;"><span style="letter-spacing:-0.06px">Uhrzeit</span></div>
<div class="fl" style="left:969px;top:687px;width:60px;height:20px;border-color:#b4b4b4"></div>
<div class="t" style="left:972px;top:691px;"><span style="letter-spacing:0.29px">00:00</span></div>
<svg class="a" style="left:1012px;top:689px" width="15" height="16" viewBox="0 0 15 16"><rect x=".5" y=".5" width="14" height="15" fill="#f0f0f0" stroke="#c4c4c4"/><path d="M.5 8 H14.5" stroke="#c4c4c4"/><path d="M4.5 5.5 L7.5 2.5 L10.5 5.5 Z M4.5 10.5 L7.5 13.5 L10.5 10.5 Z" fill="#111"/></svg>
<div class="t" style="left:664px;top:718px;"><span style="letter-spacing:0.10px">Versandtermin</span></div>
<div class="f" style="left:814px;top:714px;width:80px;height:23px;"></div>
<div class="db" style="left:895px;top:715px;width:15px;height:21px;"></div>
<div class="t" style="left:924px;top:718px;"><span style="letter-spacing:-0.06px">Uhrzeit</span></div>
<div class="fl" style="left:969px;top:714px;width:60px;height:20px;border-color:#b4b4b4"></div>
<div class="t" style="left:972px;top:718px;"><span style="letter-spacing:0.29px">00:00</span></div>
<svg class="a" style="left:1012px;top:716px" width="15" height="16" viewBox="0 0 15 16"><rect x=".5" y=".5" width="14" height="15" fill="#f0f0f0" stroke="#c4c4c4"/><path d="M.5 8 H14.5" stroke="#c4c4c4"/><path d="M4.5 5.5 L7.5 2.5 L10.5 5.5 Z M4.5 10.5 L7.5 13.5 L10.5 10.5 Z" fill="#111"/></svg>
<div class="t" style="left:664px;top:745px;"><span style="letter-spacing:0.13px">Liefertermin</span></div>
<div class="f" style="left:814px;top:741px;width:80px;height:23px;"></div>
<div class="db" style="left:895px;top:742px;width:15px;height:21px;"></div>
<div class="t" style="left:924px;top:745px;"><span style="letter-spacing:-0.06px">Uhrzeit</span></div>
<div class="fl" style="left:969px;top:741px;width:60px;height:20px;border-color:#b4b4b4"></div>
<div class="t" style="left:972px;top:745px;"><span style="letter-spacing:0.29px">00:00</span></div>
<svg class="a" style="left:1012px;top:743px" width="15" height="16" viewBox="0 0 15 16"><rect x=".5" y=".5" width="14" height="15" fill="#f0f0f0" stroke="#c4c4c4"/><path d="M.5 8 H14.5" stroke="#c4c4c4"/><path d="M4.5 5.5 L7.5 2.5 L10.5 5.5 Z M4.5 10.5 L7.5 13.5 L10.5 10.5 Z" fill="#111"/></svg>
<div class="grp" style="left:660px;top:791px;width:496px;height:300px"></div>
<div class="leg" style="left:665px;top:785px"><span style="letter-spacing:0.07px">Versanddaten</span></div>
<div class="t" style="left:664px;top:807px;"><span style="letter-spacing:0.59px">Nettogewicht</span></div>
<div class="fl" style="left:814px;top:803px;width:97px;height:23px;"></div>
<div class="cb" style="left:914px;top:802px;width:100px;height:25px;color:#000"><span><span style="letter-spacing:-0.60px">KG</span></span><svg width="9" height="6" viewBox="0 0 9 6"><path d="M0.5 0.8 L4.5 4.8 L8.5 0.8" fill="none" stroke="#444" stroke-width="1"/></svg></div>
<div class="t" style="left:664px;top:832px;"><span style="letter-spacing:0.49px">Bruttogewicht</span></div>
<div class="fl" style="left:814px;top:828px;width:97px;height:23px;"></div>
<div class="cb" style="left:914px;top:827px;width:100px;height:25px;color:#000"><span><span style="letter-spacing:-0.60px">KG</span></span><svg width="9" height="6" viewBox="0 0 9 6"><path d="M0.5 0.8 L4.5 4.8 L8.5 0.8" fill="none" stroke="#444" stroke-width="1"/></svg></div>
<div class="t" style="left:664px;top:857px;"><span style="letter-spacing:0.19px">Dimension-Text</span></div>
<div class="fl" style="left:814px;top:853px;width:197px;height:23px;"></div>
<div class="t" style="left:664px;top:882px;"><span style="letter-spacing:0.15px">Verpackung</span></div>
<div class="fl" style="left:814px;top:878px;width:197px;height:23px;"></div>
<div class="t" style="left:664px;top:907px;"><span style="letter-spacing:0.11px">Versandart</span></div>
<div class="fl" style="left:814px;top:903px;width:197px;height:23px;"></div>
<div class="t" style="left:664px;top:932px;"><span style="letter-spacing:-0.24px">Fahrzeug</span></div>
<div class="fl" style="left:814px;top:928px;width:197px;height:23px;"></div>
<div class="fl" style="left:814px;top:953px;width:197px;height:23px;"></div>
<div class="btn" style="left:1015px;top:927px;width:22px;height:22px"><svg class="a" style="left:2px;top:2px" width="16" height="16" viewBox="0 0 16 16"><use href="#mag"/></svg></div>
</div></div>
<div class="a" style="left:1161px;top:263px;width:17px;height:692px;background:#f0f0f0"></div>
<div class="a" style="left:1161px;top:264px;width:1px;height:691px;background:#fbfbfb"></div>
<div class="a" style="left:1162px;top:281px;width:15px;height:555px;background:#cdcdcd"></div>
<svg class="a" style="left:1164px;top:269px" width="11" height="8" viewBox="0 0 11 8"><path d="M1.5 6.5 L5.5 2.3 L9.5 6.5" fill="none" stroke="#484848" stroke-width="2"/></svg>
<svg class="a" style="left:1164px;top:942px" width="11" height="8" viewBox="0 0 11 8"><path d="M1.5 1.5 L5.5 5.7 L9.5 1.5" fill="none" stroke="#484848" stroke-width="2"/></svg>
<div class="a" style="left:7px;top:263px;width:1172px;height:1px;background:#8892a2"></div>
<div class="a" style="left:4px;top:263px;width:1px;height:696px;background:#a8a8a8"></div>
<div class="a" style="left:5px;top:263px;width:2px;height:695px;background:#fff"></div>
<div class="a" style="left:7px;top:263px;width:1px;height:693px;background:#8892a2"></div>
<div class="a" style="left:1178px;top:263px;width:1px;height:693px;background:#8892a2"></div>
<div class="a" style="left:1179px;top:263px;width:2px;height:695px;background:#fff"></div>
<div class="a" style="left:1181px;top:263px;width:1px;height:696px;background:#a8a8a8"></div>
<div class="a" style="left:7px;top:955px;width:1172px;height:1px;background:#8892a2"></div>
<div class="a" style="left:5px;top:956px;width:1176px;height:2px;background:#fff"></div>
<div class="a" style="left:4px;top:958px;width:1178px;height:1px;background:#a8a8a8"></div>
<div class="a" style="left:2px;top:959px;width:1486px;height:1px;background:#b4b4b4"></div>
<div class="a" style="left:2px;top:960px;width:1486px;height:1px;background:#7c7c7c"></div>
<div class="a" style="left:2px;top:961px;width:1488px;height:2px;background:#fff"></div>
<div class="a" style="left:0px;top:963px;width:1490px;height:1px;background:#a0a0a0"></div>
<div class="a" style="left:0px;top:971px;width:1497px;height:2px;background:#fdfdfd"></div>
<div class="a" style="left:0px;top:973px;width:1497px;height:1px;background:#a0a0a0"></div>
<svg class="a" style="left:1183px;top:70px" width="6" height="26" viewBox="0 0 6 26"><path d="M5.5 1 V10 L0.5 5.5 Z M0.5 16 V25 L5.5 20.5 Z" fill="#666"/></svg>
<svg class="a" style="left:1185px;top:491px" width="2" height="34" viewBox="0 0 2 34" shape-rendering="crispEdges"><rect x="0" y="0" width="2" height="2" fill="#8c8c8c"/><rect x="0" y="4" width="2" height="2" fill="#8c8c8c"/><rect x="0" y="8" width="2" height="2" fill="#8c8c8c"/><rect x="0" y="12" width="2" height="2" fill="#8c8c8c"/><rect x="0" y="16" width="2" height="2" fill="#8c8c8c"/><rect x="0" y="20" width="2" height="2" fill="#8c8c8c"/><rect x="0" y="24" width="2" height="2" fill="#8c8c8c"/><rect x="0" y="28" width="2" height="2" fill="#8c8c8c"/><rect x="0" y="32" width="2" height="2" fill="#8c8c8c"/></svg>
<div class="a" style="left:1190px;top:60px;width:296px;height:899px;background:linear-gradient(180deg,#eeeeee 0%,#9e9e9e 100%)"></div>
<div class="ph" style="top:72px"><svg class="a" style="left:4px;top:4px" width="16" height="16" viewBox="0 0 16 16"><use href="#boxes16"/></svg><b>Aktivitätsleiste</b><svg class="a" style="right:9px;top:2px" width="16" height="16" viewBox="0 0 14 14"><use href="#chev"/></svg></div>
<div class="pc" style="top:94px;height:45px"></div>
<svg class="a" style="left:1206px;top:97px;" width="16" height="16" viewBox="0 0 16 16"><use href="#phone16"/></svg>
<div class="t" style="left:1227px;top:99px;"><span style="letter-spacing:0.27px">Telefonnotiz</span></div>
<svg class="a" style="left:1206px;top:119px;" width="16" height="16" viewBox="0 0 16 16"><use href="#calc16"/></svg>
<div class="t" style="left:1226px;top:120px;"><span style="letter-spacing:-0.28px">Kalkulation</span></div>
<div class="ph" style="top:154px"><svg class="a" style="left:4px;top:4px" width="16" height="16" viewBox="0 0 16 16"><use href="#boxes16"/></svg><b>History</b><svg class="a" style="right:9px;top:2px" width="16" height="16" viewBox="0 0 14 14"><use href="#chev"/></svg></div>
<div class="pc" style="top:176px;height:202px;border-left:3px solid #8095b7"></div>
<div class="a" style="left:1207px;top:178px;width:13px;height:16px;background:#fde28b;border:1px solid #f3d56f"></div>
<div class="a" style="left:1217px;top:189px;width:3px;height:5px;background:#fff0b8;border:1px solid #f3d56f"></div>
<svg class="a" style="left:1212px;top:194px" width="14" height="10" viewBox="0 0 14 10"><path d="M.5 0 V8.5 H13" fill="none" stroke="#808080" stroke-width="1" stroke-dasharray="1 1"/></svg>
<div class="a" style="left:1228px;top:199px;width:8px;height:8px;background:#5a5a5a;border-radius:50%"></div>
<div class="t" style="left:1226px;top:180px;"><span style="letter-spacing:0.01px">Objekthistorie - SalesRequest</span></div>
<div class="t" style="left:1244px;top:196px;"><span style="letter-spacing:0.29px">id - AF140001 ()</span></div>
<div class="a" style="left:1455px;top:177px;width:16px;height:184px;background:#f0f0f0"></div>
<div class="a" style="left:1456px;top:194px;width:14px;height:136px;background:#cdcdcd"></div>
<svg class="a" style="left:1458px;top:182px" width="10" height="7" viewBox="0 0 10 7"><path d="M1.5 5.5 L5 2 L8.5 5.5" fill="none" stroke="#484848" stroke-width="2"/></svg>
<svg class="a" style="left:1458px;top:348px" width="10" height="7" viewBox="0 0 10 7"><path d="M1.5 1.5 L5 5 L8.5 1.5" fill="none" stroke="#484848" stroke-width="2"/></svg>
<div class="a" style="left:1204px;top:361px;width:267px;height:16px;background:#f0f0f0"></div>
<div class="a" style="left:1221px;top:362px;width:180px;height:14px;background:#cdcdcd"></div>
<svg class="a" style="left:1209px;top:364px" width="7" height="10" viewBox="0 0 7 10"><path d="M5.5 1.5 L2 5 L5.5 8.5" fill="none" stroke="#484848" stroke-width="2"/></svg>
<svg class="a" style="left:1442px;top:364px" width="7" height="10" viewBox="0 0 7 10"><path d="M1.5 1.5 L5 5 L1.5 8.5" fill="none" stroke="#484848" stroke-width="2"/></svg>
<div class="ph" style="top:394px"><svg class="a" style="left:4px;top:4px" width="16" height="16" viewBox="0 0 16 16"><use href="#boxes16"/></svg><b><span style="font-size:12.5px">QuickSearch Material</span></b><svg class="a" style="right:9px;top:2px" width="16" height="16" viewBox="0 0 14 14"><use href="#chev"/></svg></div>
<div class="pc" style="top:416px;height:221px"></div>
<div class="a" style="left:1203px;top:436px;width:269px;height:2px;background:#8a97ab"></div>
<div class="rr" style="left:4px;top:236px;width:629px;height:26px"></div>
<div class="rr" style="left:4px;top:260px;width:1178px;height:646px"></div>
<div class="rl" style="left:28.6px;top:56px;width:1.6px;height:12.0px"></div>
<div class="rl" style="left:71.7px;top:56px;width:1.6px;height:13.0px"></div>
<div class="rl" style="left:127.8px;top:56px;width:1.6px;height:15.0px"></div>
<div class="rl" style="left:176.7px;top:56px;width:1.6px;height:16.5px"></div>
<div class="rl" style="left:28.7px;top:105px;width:1.6px;height:15.0px"></div>
<div class="rl" style="left:61.6px;top:105.6px;width:1.6px;height:14.4px"></div>
<div class="rl" style="left:90.6px;top:105.6px;width:1.6px;height:14.4px"></div>
<div class="rl" style="left:122.6px;top:105.6px;width:1.6px;height:15.4px"></div>
<div class="rl" style="left:153.8px;top:103px;width:1.6px;height:18.0px"></div>
<div class="rl" style="left:186.6px;top:105px;width:1.6px;height:17.0px"></div>
<div class="rl" style="left:217.8px;top:105px;width:1.6px;height:17.0px"></div>
<div class="rl" style="left:247.7px;top:106px;width:1.6px;height:17.0px"></div>
<div class="rl" style="left:319.5px;top:76px;width:1.6px;height:14.0px"></div>
<div class="rl" style="left:422.8px;top:77px;width:1.6px;height:19.7px"></div>
<div class="rl" style="left:449.6px;top:77px;width:1.6px;height:18.0px"></div>
<div class="rl" style="left:479.6px;top:77px;width:1.6px;height:17.0px"></div>
<div class="rl" style="left:511.7px;top:78px;width:1.6px;height:17.0px"></div>
<div class="rl" style="left:543.9px;top:77px;width:1.6px;height:18.5px"></div>
<div class="rl rh" style="left:230px;top:156.5px;width:74.0px;height:1.6px"></div>
<div class="rl rh" style="left:136px;top:183.7px;width:34.5px;height:1.6px"></div>
<div class="rl" style="left:475.6px;top:157px;width:1.6px;height:17.0px"></div>
<div class="rl rh" style="left:704px;top:180.6px;width:35.0px;height:1.6px"></div>
<div class="rl rh" style="left:459px;top:204.4px;width:41.0px;height:1.6px"></div>
<div class="rl" style="left:622.8px;top:224px;width:1.6px;height:13.0px"></div>
<div class="rl" style="left:626.6px;top:262px;width:1.6px;height:20.0px"></div>
<div class="circ" style="left:15.0px;top:29.0px">1</div>
<div class="circ" style="left:59.0px;top:29.0px">2</div>
<div class="circ" style="left:114.0px;top:29.0px">3</div>
<div class="circ" style="left:163.0px;top:29.0px">4</div>
<div class="circ" style="left:15.0px;top:117.0px">5</div>
<div class="circ" style="left:47.0px;top:118.0px">6</div>
<div class="circ" style="left:78.0px;top:118.0px">7</div>
<div class="circ" style="left:109.2px;top:119.0px">8</div>
<div class="circ" style="left:141.0px;top:119.1px">9</div>
<div class="circ" style="left:173.1px;top:120.1px">10</div>
<div class="circ" style="left:204.2px;top:120.1px">11</div>
<div class="circ" style="left:235.1px;top:121.1px">12</div>
<div class="circ" style="left:306.0px;top:49.1px">13</div>
<div class="circ" style="left:406.8px;top:50.099999999999994px">14</div>
<div class="circ" style="left:436.3px;top:50.099999999999994px">15</div>
<div class="circ" style="left:466.8px;top:50.099999999999994px">16</div>
<div class="circ" style="left:497.9px;top:51.2px">17</div>
<div class="circ" style="left:529.1px;top:50.099999999999994px">18</div>
<div class="circ" style="left:302.1px;top:142.1px">19</div>
<div class="circ" style="left:108.9px;top:169.0px">20</div>
<div class="circ" style="left:462.0px;top:130.0px">21</div>
<div class="circ" style="left:737.0px;top:166.8px">22</div>
<div class="circ" style="left:498.0px;top:190.1px">23</div>
<div class="circ" style="left:608.0px;top:196.8px">24</div>
<div class="circ" style="left:612.1px;top:280.0px">25</div>
</body></html>
